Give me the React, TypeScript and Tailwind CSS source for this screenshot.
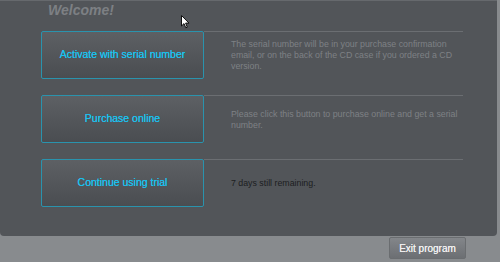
import React from 'react';

const rows = [
  {
    label: 'Activate with serial number',
    text: 'The serial number will be in your purchase confirmation email, or on the back of the CD case if you ordered a CD version.',
    dark: false,
  },
  {
    label: 'Purchase online',
    text: 'Please click this button to purchase online and get a serial number.',
    dark: false,
  },
  {
    label: 'Continue using trial',
    text: '7 days still remaining.',
    dark: true,
  },
];

function Cursor() {
  return (
    <svg className="absolute left-[181px] top-[15px]" width="9" height="14" viewBox="0 0 9 14">
      <path d="M0.5 0.5 L0.5 11 L3 8.6 L4.8 12.8 L6.3 12.2 L4.6 8.1 L8 8.1 Z" fill="#ffffff" stroke="#111111" strokeWidth="1" strokeLinejoin="round" />
    </svg>
  );
}

export default function App() {
  return (
    <div className="relative w-[500px] h-[262px] overflow-hidden bg-[#888b8e] font-['Liberation_Sans',Arial,sans-serif]">
      {/* Main panel */}
      <div className="w-[497px] h-[236px] bg-[#525559] rounded-b-[4px] border-t border-[#66696d]">
        <div className="h-[30px] pl-[48px] pt-[1px]">
          <h1 className="text-[14px] leading-[16px] font-bold italic text-[#7d8084]">Welcome!</h1>
        </div>

        <div className="flex flex-col gap-[16px] pl-[41px]">
          {rows.map(r => (
            <div key={r.label} className="flex h-[48px]">
              <button className="w-[163px] h-[48px] shrink-0 rounded-[2px] border border-[#2a93ad] bg-gradient-to-b from-[#5d6064] to-[#4a4d51] text-[10.5px] text-[#1cc0ee] [text-shadow:0_0_0.4px_#1cc0ee]">
                {r.label}
              </button>
              <div className="w-[259px] border-t border-[#6b6e72] flex items-center pl-[27px]">
                <p className={`w-[236px] shrink-0 text-[8.8px] leading-[11px] ${r.dark ? 'text-[#1c1d1f]' : 'text-[#7e8185]'}`}>
                  {r.text}
                </p>
              </div>
            </div>
          ))}
        </div>
      </div>

      {/* Footer */}
      <div className="flex justify-end pr-[34px] pt-[1px]">
        <button className="w-[77px] h-[22px] rounded-[2px] border border-[#6a6d70] bg-gradient-to-b from-[#83868a] to-[#6c6f73] text-[10px] text-[#f0f0f0] [text-shadow:0_0_0.4px_#f0f0f0]">
          Exit program
        </button>
      </div>

      <Cursor />
    </div>
  );
}
